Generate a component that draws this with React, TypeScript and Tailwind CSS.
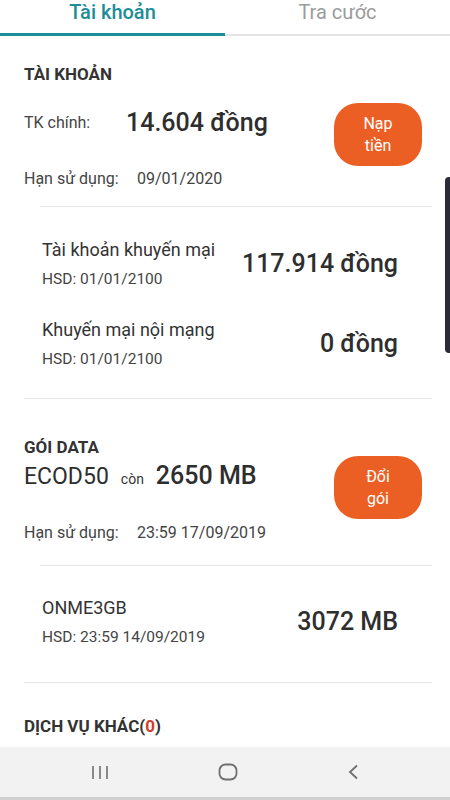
import clsx from 'clsx'

const font = { fontFamily: 'Roboto, "Noto Sans", sans-serif' }

function OrangeButton({ lines, className }: { lines: [string, string]; className?: string }) {
  return (
    <button
      className={clsx(
        'flex h-[63px] w-[88px] shrink-0 flex-col items-center justify-center rounded-[24px] bg-[#ec5f24] text-[16px] leading-[22px] text-white',
        className
      )}
    >
      <span>{lines[0]}</span>
      <span>{lines[1]}</span>
    </button>
  )
}

function SubRow({ title, hsd, value, className }: { title: string; hsd: string; value: string; className?: string }) {
  return (
    <div className={clsx('flex items-center justify-between pl-[42px] pr-[52px]', className)}>
      <div className="flex flex-col">
        <span className="text-[18px] leading-[22px] text-[#333]">{title}</span>
        <span className="mt-[9px] text-[15.5px] leading-[18px] text-[#444]">{hsd}</span>
      </div>
      <span className="text-[25px] leading-[30px] font-medium text-[#2e2e2e]">{value}</span>
    </div>
  )
}

function Divider({ inset, className }: { inset?: boolean; className?: string }) {
  return <div className={clsx('mr-[18px] h-px shrink-0 bg-[#e6e6ec]', inset ? 'ml-[40px]' : 'ml-[24px]', className)} />
}

function SectionTitle({ children, className }: { children: React.ReactNode; className?: string }) {
  return <div className={clsx('pl-[24px] text-[17px] leading-[18px] font-bold text-[#333]', className)}>{children}</div>
}

export default function App() {
  return (
    <div className="relative flex h-[800px] w-[450px] flex-col overflow-hidden bg-white text-[#333]" style={font}>
      {/* tabs */}
      <div className="flex h-[37px] shrink-0">
        <div className="flex flex-1 flex-col">
          <div className="flex h-[33px] justify-center text-[20px] leading-[24px] font-medium text-[#1b8d97]">Tài khoản</div>
          <div className="h-[3px] bg-[#1b8d97]" />
        </div>
        <div className="flex flex-1 flex-col">
          <div className="flex h-[34px] justify-center text-[20px] leading-[24px] text-[#9b9b9b]">Tra cước</div>
          <div className="h-[2px] bg-[#e4e4e4]" />
        </div>
      </div>

      {/* Tài khoản */}
      <SectionTitle className="mt-[28px]">TÀI KHOẢN</SectionTitle>
      <div className="mt-[20px] flex items-start pl-[24px] pr-[28px]">
        <div className="flex flex-1 flex-col">
          <div className="flex h-[40px] items-center">
            <span className="w-[102px] text-[16px] text-[#444]">TK chính:</span>
            <span className="text-[25px] leading-[30px] font-medium text-[#2e2e2e]">14.604 đồng</span>
          </div>
          <div className="mt-[26px] flex h-[20px] items-center text-[16px] text-[#444]">
            <span className="w-[113px]">Hạn sử dụng:</span>
            <span>09/01/2020</span>
          </div>
        </div>
        <OrangeButton className="mt-0" lines={['Nạp', 'tiền']} />
      </div>
      <Divider inset className="mt-[17px]" />
      <SubRow className="mt-[32px]" title="Tài khoản khuyến mại" hsd="HSD: 01/01/2100" value="117.914 đồng" />
      <SubRow className="mt-[31px]" title="Khuyến mại nội mạng" hsd="HSD: 01/01/2100" value="0 đồng" />
      <Divider className="mt-[30px]" />

      {/* Gói data */}
      <div className="mt-[39px] flex items-start pr-[28px]">
        <div className="flex flex-1 flex-col">
          <SectionTitle>GÓI DATA</SectionTitle>
          <div className="mt-[5px] flex h-[30px] items-baseline pl-[24px]">
            <span className="text-[23px] leading-[30px] text-[#2e2e2e]">ECOD50</span>
            <span className="ml-[12px] text-[14px] text-[#333]">còn</span>
            <span className="ml-[12px] text-[25px] leading-[30px] font-medium text-[#2e2e2e]">2650 MB</span>
          </div>
          <div className="mt-[32px] flex h-[20px] items-center pl-[24px] text-[16px] text-[#444]">
            <span className="w-[113px]">Hạn sử dụng:</span>
            <span>23:59 17/09/2019</span>
          </div>
        </div>
        <OrangeButton className="mt-[18px]" lines={['Đổi', 'gói']} />
      </div>
      <Divider inset className="mt-[22px]" />
      <SubRow className="mt-[31px]" title="ONME3GB" hsd="HSD: 23:59 14/09/2019" value="3072 MB" />
      <Divider className="mt-[36px]" />

      <SectionTitle className="mt-[34px]">
        DỊCH VỤ KHÁC(<span className="text-[#d63a2a]">0</span>)
      </SectionTitle>

      {/* nav bar */}
      <div className="mt-auto flex h-[53px] shrink-0 items-center justify-around border-b-[3px] border-[#cfcfcf] bg-[#f2f2f2] px-[36px] text-[#6f6f6f]">
        <svg width="18" height="15" viewBox="0 0 18 15" fill="none" stroke="currentColor" strokeWidth="1.6">
          <path d="M2 1v13M9 1v13M16 1v13" />
        </svg>
        <svg width="20" height="18" viewBox="0 0 20 18" fill="none" stroke="currentColor" strokeWidth="1.8">
          <rect x="1.5" y="1.5" width="17" height="15" rx="6" />
        </svg>
        <svg width="12" height="16" viewBox="0 0 12 16" fill="none" stroke="currentColor" strokeWidth="1.8">
          <path d="M10 1.5L3 8l7 6.5" />
        </svg>
      </div>

      {/* edge handle */}
      <div className="absolute top-[177px] right-0 h-[176px] w-[5px] rounded-l-[4px] bg-[#2a2a38]" />
    </div>
  )
}
